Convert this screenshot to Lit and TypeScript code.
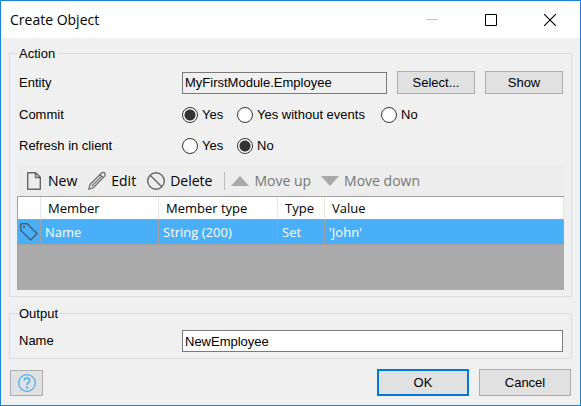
import { LitElement, html, css, svg } from "lit";
import { customElement, state } from "lit/decorators.js";

interface MemberRow {
  member: string;
  memberType: string;
  type: string;
  value: string;
}

const stroke = (body: unknown, size = 20) => html`<svg
  width=${size}
  height=${size}
  viewBox="0 0 ${size} ${size}"
  fill="none"
  stroke="currentColor"
  aria-hidden="true"
>${body}</svg>`;

const icons = {
  page: stroke(svg`<path stroke-width="1.4" stroke-linejoin="round" d="M3.700 1.700h8l4.600 4.600v12H3.700z M11.500 1.700v4.800h4.800"/>`),
  pencil: stroke(svg`<path stroke-width="1.2" stroke-linejoin="round" d="M1.700 18.300l1.200-4.600L14.600 2c1.100-1 2.400-.4 3-.1 .5.900 1 2.100 0 3.300L6 17z M13 3.600l3.100 3.100 M4.500 15.300L14.700 5.100"/>`),
  forbid: stroke(svg`<circle cx="10" cy="10" r="8.300" stroke-width="1.400"/><path stroke-width="1.400" d="M4.200 4.200l11.600 11.600"/>`),
  up: html`<svg width="18" height="10" viewBox="0 0 18 10" aria-hidden="true"><path fill="#a9a9a9" d="M0 10L9 0l9 10z"/></svg>`,
  down: html`<svg width="18" height="10" viewBox="0 0 18 10" aria-hidden="true"><path fill="#a9a9a9" d="M0 0h18L9 10z"/></svg>`,
  tag: stroke(svg`<path stroke-width="1.400" stroke-linejoin="round" d="M1.700 2.700c0-.6.4-1 1-1h5.600L18 11.600 11.700 18 1.700 8.300z"/><circle cx="5" cy="5" r="1.100" fill="currentColor" stroke="none"/>`),
  help: stroke(svg`<circle cx="10" cy="10" r="8.300" stroke-width="1.300"/><path stroke-width="1.600" d="M7.300 7.600c0-3.400 5.500-3.300 5.400-.2 0 2.100-2.700 2-2.700 4.600"/><path stroke-width="2" d="M10 13.500v2"/>`),
  minimize: html`<svg width="12" height="12" viewBox="0 0 12 12" aria-hidden="true"><path stroke="#c4c4c4" d="M0 5.500h12"/></svg>`,
  maximize: html`<svg width="12" height="12" viewBox="0 0 12 12" aria-hidden="true"><path fill="none" stroke="#000" d="M.5.5h11v11H.5z"/></svg>`,
  close: html`<svg width="12" height="12" viewBox="0 0 12 12" aria-hidden="true"><path stroke="#000" stroke-width="1.100" d="M0 0l12 12M12 0L0 12"/></svg>`,
};

@customElement("app-root")
export class AppRoot extends LitElement {
  static styles = css`
    :host {
      display: flex;
      flex-direction: column;
      box-sizing: border-box;
      min-height: 100vh;
      border: 1px solid #1883d7;
      background: #f0f0f0;
      color: #000;
      font: 13px/16px "Liberation Sans", Arial, sans-serif;
    }
    * {
      box-sizing: border-box;
    }
    button,
    input {
      font: inherit;
      color: inherit;
      margin: 0;
    }
    svg {
      display: block;
      flex: none;
    }
    .titlebar {
      display: flex;
      height: 37px;
      padding-right: 1px;
      background: #fff;
    }
    .title {
      flex: 1;
      margin: 0;
      padding-left: 9px;
      font: 14px/37px "Open Sans", "Noto Sans", sans-serif;
    }
    .caption {
      display: flex;
      align-items: center;
      justify-content: center;
      width: 59px;
      padding: 0;
      border: 0;
      background: none;
    }
    .body {
      flex: 1;
      display: flex;
      flex-direction: column;
      padding: 7px 8px 9px;
    }
    .group {
      min-width: 0;
      margin: 0;
      padding: 8px 7px 6px;
      border: 1px solid #dcdcdc;
    }
    .actions {
      margin-bottom: 8px;
      padding-top: 9px;
    }
    .legend {
      padding: 0 2px;
      line-height: 17px;
    }
    .row {
      display: flex;
      align-items: center;
      padding: 0 1px 0 2px;
    }
    .label {
      flex: none;
      width: 163px;
    }
    .choices {
      min-height: 16px;
      margin-bottom: 15px;
    }
    .entity {
      margin-bottom: 13px;
    }
    .refresh {
      margin-bottom: 11px;
    }
    .field {
      flex: 1;
      min-width: 0;
      height: 22px;
      padding: 0 2px;
      border: 1px solid #7a7a7a;
      border-radius: 0;
      background: #fff;
      outline: none;
    }
    .field:read-only {
      background: #f0f0f0;
    }
    .button {
      display: flex;
      align-items: center;
      justify-content: center;
      width: 78px;
      height: 23px;
      padding: 0;
      border: 1px solid #adadad;
      background: #e1e1e1;
    }
    .side {
      margin-left: 10px;
    }
    .radios {
      display: grid;
      grid-template-columns: 55px 144px auto;
    }
    .choice {
      display: flex;
      align-items: center;
      gap: 4px;
      white-space: nowrap;
    }
    .radio {
      appearance: none;
      flex: none;
      width: 16px;
      height: 16px;
      border: 1px solid #333;
      border-radius: 50%;
      background: #fff;
    }
    .radio:checked {
      background: radial-gradient(circle, #333 0 5px, #fff 6px);
    }
    .toolbar {
      display: flex;
      align-items: center;
      height: 31px;
      padding-left: 7px;
      background: #ededed;
      font: 14px/20px "Open Sans", "Noto Sans", sans-serif;
    }
    .tool {
      display: flex;
      align-items: center;
      gap: 4px;
      margin-right: 10px;
      padding: 0;
      border: 0;
      background: none;
      white-space: nowrap;
    }
    .tool svg {
      color: #666;
    }
    .tool:disabled {
      gap: 5px;
      color: #777;
    }
    .divider {
      width: 1px;
      height: 18px;
      margin: 0 6px 0 2px;
      background: #bdbdbd;
    }
    .grid {
      min-height: 94px;
      border: 1px solid #a0a0a0;
      border-width: 1px 0 0 1px;
      background: #ababab;
    }
    .table {
      width: 100%;
      border-collapse: separate;
      border-spacing: 0;
      table-layout: fixed;
      font: 13px/20px "Open Sans", "Noto Sans", sans-serif;
    }
    .icon-col {
      width: 23px;
    }
    .wide-col {
      width: 118px;
    }
    .member-type-col {
      width: 119px;
    }
    .type-col {
      width: 47px;
    }
    .head {
      height: 23px;
      padding: 0 0 0 7px;
      border: 1px solid #e5e5e5;
      border-width: 0 1px 1px 0;
      border-bottom-color: #a0a0a0;
      background: #fff;
      font-weight: 400;
      text-align: left;
      white-space: nowrap;
    }
    .cell {
      height: 25px;
      padding: 0 0 0 4px;
      border: 1px solid #a0a0a0;
      border-width: 0 1px 1px 0;
      background: #48aff8;
      color: #fff;
      white-space: nowrap;
    }
    .tag {
      padding: 0 1px;
      color: #49606f;
    }
    .footer {
      display: flex;
      align-items: center;
      gap: 10px;
      padding: 10px 1px 0;
    }
    .action {
      width: 92px;
      height: 27px;
    }
    .primary {
      border: 2px solid #0078d7;
    }
    .help {
      width: 33px;
      height: 26px;
      margin-right: auto;
      color: #48aff8;
    }
  `;

  @state() private commit = "Yes";
  @state() private refresh = "No";
  private rows: MemberRow[] = [
    { member: "Name", memberType: "String (200)", type: "Set", value: "'John'" },
  ];

  private radios(name: string, label: string, options: string[], current: string, pick: (v: string) => void) {
    return html`<div class="radios" role="radiogroup" aria-label=${label}>
      ${options.map(
        (o) => html`<label class="choice"
          ><input class="radio" type="radio" name=${name} .checked=${o === current} @change=${() => pick(o)} />${o}</label
        >`,
      )}
    </div>`;
  }

  render() {
    return html`
      <header class="titlebar">
        <h1 class="title">Create Object</h1>
        <button class="caption" aria-label="Minimize" disabled>${icons.minimize}</button>
        <button class="caption" aria-label="Maximize">${icons.maximize}</button>
        <button class="caption" aria-label="Close">${icons.close}</button>
      </header>
      <main class="body">
        <fieldset class="group actions">
          <legend class="legend">Action</legend>
          <div class="row entity">
            <label class="label" for="entity">Entity</label>
            <input class="field" id="entity" readonly value="MyFirstModule.Employee" />
            <button class="button side">Select...</button>
            <button class="button side">Show</button>
          </div>
          <div class="row choices">
            <span class="label">Commit</span>
            ${this.radios("commit", "Commit", ["Yes", "Yes without events", "No"], this.commit, (v) => (this.commit = v))}
          </div>
          <div class="row refresh">
            <span class="label">Refresh in client</span>
            ${this.radios("refresh", "Refresh in client", ["Yes", "No"], this.refresh, (v) => (this.refresh = v))}
          </div>
          <div class="toolbar" role="toolbar">
            <button class="tool">${icons.page}New</button>
            <button class="tool">${icons.pencil}Edit</button>
            <button class="tool">${icons.forbid}Delete</button>
            <span class="divider"></span>
            <button class="tool" disabled>${icons.up}Move up</button>
            <button class="tool" disabled>${icons.down}Move down</button>
          </div>
          <div class="grid">
            <table class="table">
              <colgroup>
                <col class="icon-col" />
                <col class="wide-col" />
                <col class="member-type-col" />
                <col class="type-col" />
                <col />
              </colgroup>
              <thead>
                <tr>
                  <th class="head"></th>
                  <th class="head">Member</th>
                  <th class="head">Member type</th>
                  <th class="head">Type</th>
                  <th class="head">Value</th>
                </tr>
              </thead>
              <tbody>
                ${this.rows.map(
                  (r) => html`<tr>
                    <td class="cell tag">${icons.tag}</td>
                    <td class="cell">${r.member}</td>
                    <td class="cell">${r.memberType}</td>
                    <td class="cell">${r.type}</td>
                    <td class="cell">${r.value}</td>
                  </tr>`,
                )}
              </tbody>
            </table>
          </div>
        </fieldset>
        <fieldset class="group">
          <legend class="legend">Output</legend>
          <div class="row">
            <label class="label" for="name">Name</label>
            <input class="field" id="name" value="NewEmployee" />
          </div>
        </fieldset>
        <footer class="footer">
          <button class="button help" aria-label="Help">${icons.help}</button>
          <button class="button action primary">OK</button>
          <button class="button action">Cancel</button>
        </footer>
      </main>
    `;
  }
}
